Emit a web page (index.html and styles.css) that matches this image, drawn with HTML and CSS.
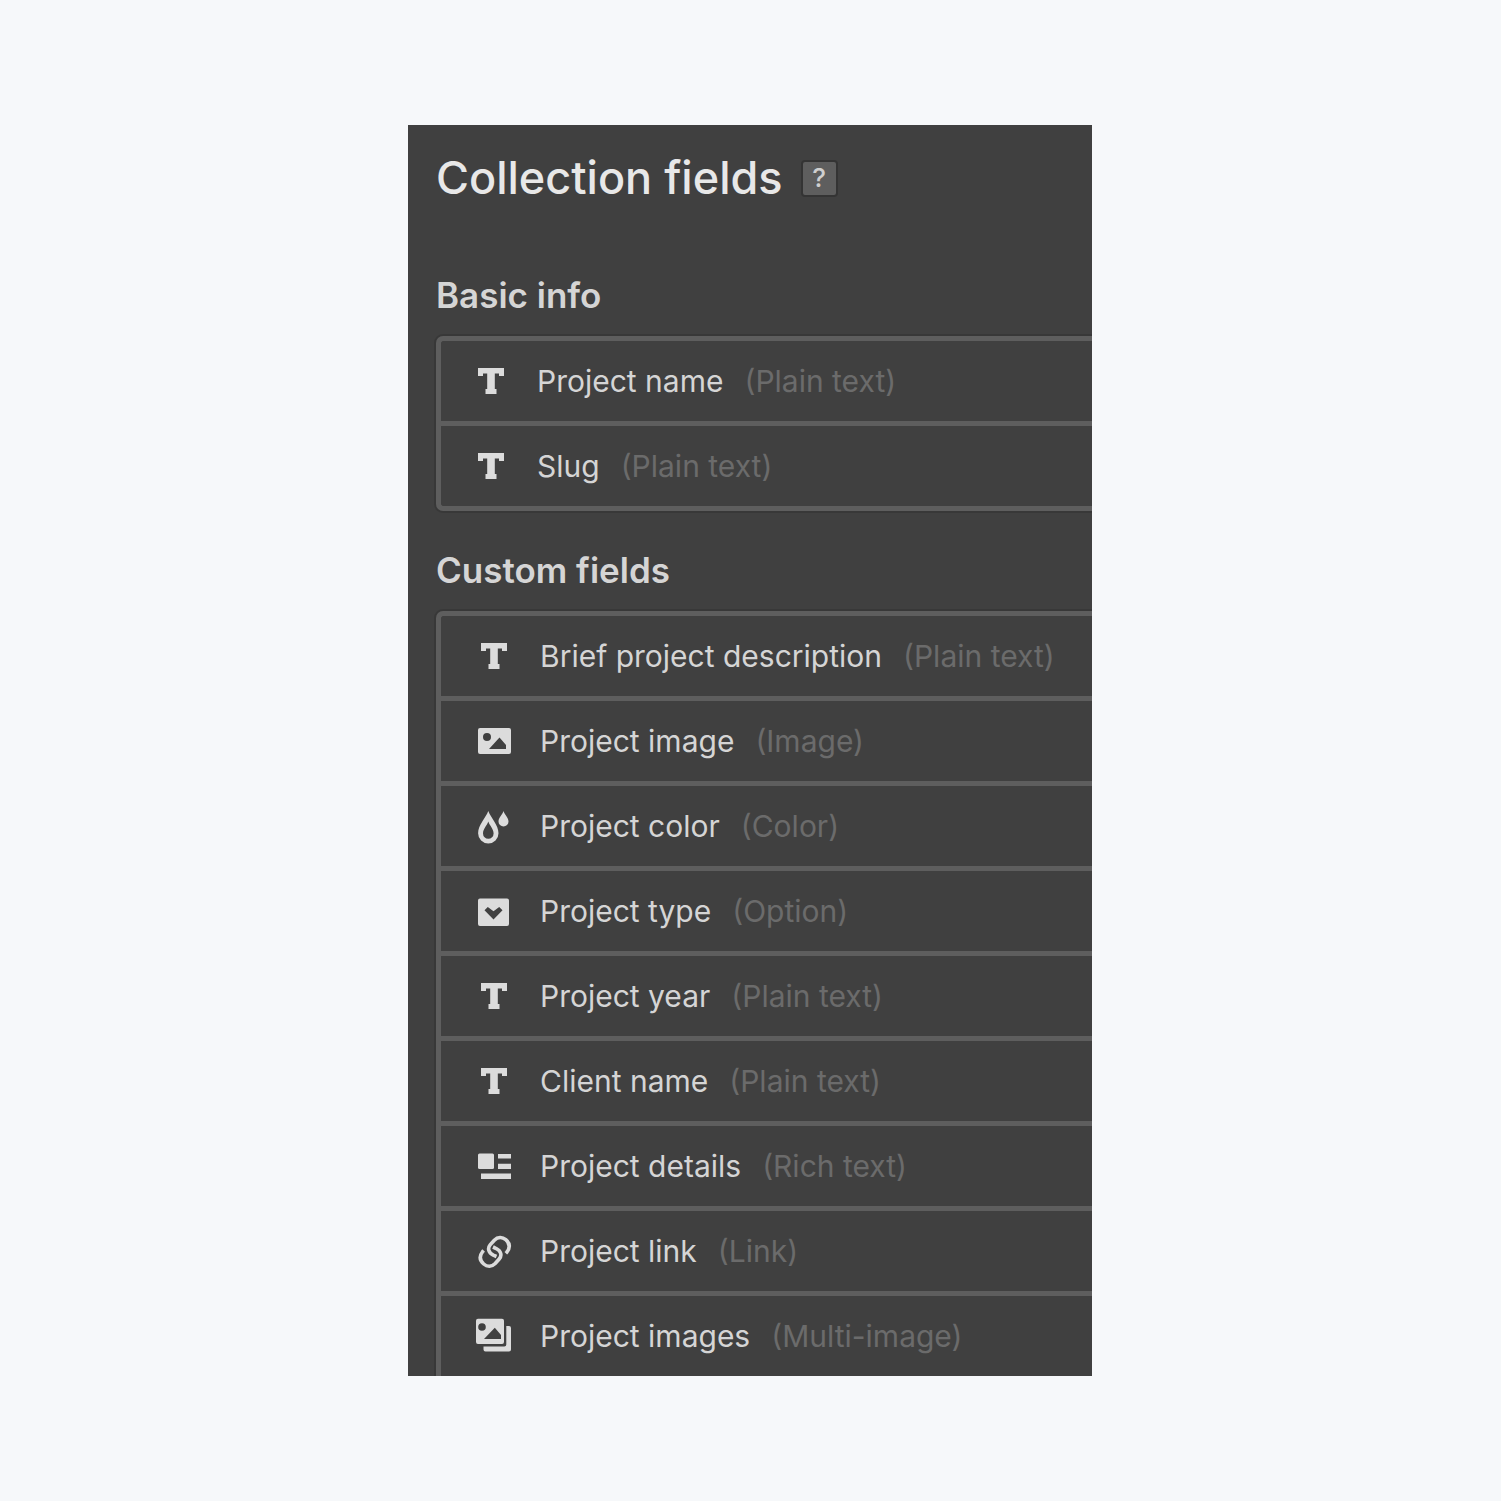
FILE: index.html
```
<!DOCTYPE html>
<html lang="en">
<head>
  <meta charset="UTF-8" />
  <meta name="viewport" content="width=device-width, initial-scale=1" />
  <title>Collection fields</title>
  <link rel="stylesheet" href="styles.css">
</head>
<body>

  <!-- Icons -->
  <svg class="sprite" aria-hidden="true">
    <symbol id="text" viewBox="0 0 36 36">
      <path d="M5 5h26v8h-5v-2.500h-4.200V26H23.500v5h-11v-5h1.700V10.500H10V13H5z"/>
    </symbol>
    <symbol id="image" viewBox="0 0 36 36">
      <path fill-rule="evenodd" d="M4 5h29a2 2 0 0 1 2 2v22a2 2 0 0 1-2 2H4a2 2 0 0 1-2-2V7a2 2 0 0 1 2-2zM11 10a4 4 0 1 0 0 8 4 4 0 0 0 0-8zM13 26h17v-4l-6.500-7.500z"/>
    </symbol>
    <symbol id="color" viewBox="0 0 36 36">
      <path fill-rule="evenodd" d="M12.300 3C15 10 22.500 17 22.500 25.200a10.200 10.200 0 0 1-20.400 0C2.100 17 9.600 10 12.300 3zM12.300 13.500C11 17.500 7 21 7 25.500a5.300 5.300 0 0 0 10.600 0C17.600 21 13.600 17.500 12.300 13.500z"/>
      <path d="M27.500 3c1.200 4 5 6.500 5 10.500a5 5 0 0 1-10 0c0-4 3.800-6.500 5-10.500z"/>
    </symbol>
    <symbol id="option" viewBox="0 0 36 36">
      <path fill-rule="evenodd" d="M4 5.500h27a2 2 0 0 1 2 2V31a2 2 0 0 1-2 2H4a2 2 0 0 1-2-2V7.500a2 2 0 0 1 2-2zM8.500 17.200l9 9.200 9-9.200-3.300-3.300-5.700 4.400-5.700-4.400z"/>
    </symbol>
    <symbol id="rich" viewBox="0 0 36 36">
      <rect x="2" y="5.500" width="16" height="15.500" rx="1.500"/>
      <path d="M22 6h13v4.500H22zM22 15.800h13V21H22zM5 25.500h30V31H5z"/>
    </symbol>
    <symbol id="link" viewBox="0 0 36 36">
      <g fill="none" stroke="currentColor" stroke-width="3.600">
        <path d="M20.500 23.500l-3.200-1.300c-5-2.500-6-7-3-10.500l4-4.500c3.500-3.500 8-3.500 11.500-.5 4 3.500 4.500 8 1 12.500l-1 1"/>
        <path d="M17 14l3.200 1.500c5 2.500 6 7 3 10.500l-4 4.500c-3.500 3.500-8 3.500-11.500.5-4-3.500-4.500-8-1-12.500l1-1"/>
      </g>
    </symbol>
    <symbol id="images" viewBox="0 0 36 36">
      <path fill-rule="evenodd" d="M2 .7h24a2 2 0 0 1 2 2V24a2 2 0 0 1-2 2H2a2 2 0 0 1-2-2V2.700a2 2 0 0 1 2-2zM6 5.200a3.800 3.800 0 1 0 0 7.600 3.800 3.800 0 0 0 0-7.600zM8 21h17v-4l-6.200-7.300z"/>
      <path d="M30.300 8H33a2 2 0 0 1 2 2v21.500a2 2 0 0 1-2 2H9.500a2 2 0 0 1-2-2V28.500h20.800a2 2 0 0 0 2-2z"/>
    </symbol>
  </svg>

  <main class="panel">
    <header class="title">
      <h1>Collection fields</h1>
      <button class="help" type="button" aria-label="Help">?</button>
    </header>

    <!-- Basic info -->
    <section>
      <h2>Basic info</h2>
      <ul class="fields basic">
        <li><svg class="icon"><use href="#text"/></svg>Project name <span class="type">(Plain text)</span></li>
        <li><svg class="icon"><use href="#text"/></svg>Slug <span class="type">(Plain text)</span></li>
      </ul>
    </section>

    <!-- Custom fields -->
    <section>
      <h2>Custom fields</h2>
      <ul class="fields custom">
        <li><svg class="icon"><use href="#text"/></svg>Brief project description <span class="type">(Plain text)</span></li>
        <li><svg class="icon"><use href="#image"/></svg>Project image <span class="type">(Image)</span></li>
        <li><svg class="icon"><use href="#color"/></svg>Project color <span class="type">(Color)</span></li>
        <li><svg class="icon"><use href="#option"/></svg>Project type <span class="type">(Option)</span></li>
        <li><svg class="icon"><use href="#text"/></svg>Project year <span class="type">(Plain text)</span></li>
        <li><svg class="icon"><use href="#text"/></svg>Client name <span class="type">(Plain text)</span></li>
        <li><svg class="icon"><use href="#rich"/></svg>Project details <span class="type">(Rich text)</span></li>
        <li><svg class="icon"><use href="#link"/></svg>Project link <span class="type">(Link)</span></li>
        <li><svg class="icon"><use href="#images"/></svg>Project images <span class="type">(Multi-image)</span></li>
      </ul>
    </section>
  </main>

</body>
</html>
```
FILE: styles.css
```
* {
  box-sizing: border-box;
}

body {
  margin: 0;
  padding: 125px 25px 125px 24px;
  background: #f6f8fa;
  font-family: Inter, "Liberation Sans", sans-serif;
  color: #d5d5d5;
}

.sprite {
  display: none;
}

.panel {
  max-width: 684px;
  margin: 0 auto;
  padding: 23px 0 0 28px;
  background: #404040;
  overflow: hidden;
}

.title {
  display: flex;
  align-items: center;
  gap: 18px;
  margin-bottom: 65px;
}

h1 {
  margin: 0;
  font-size: 45px;
  line-height: 60px;
  font-weight: 500;
  color: #e8e8e8;
}

.help {
  width: 37px;
  height: 37px;
  padding: 0;
  border: 2px solid #343434;
  border-radius: 4px;
  background: #5e5e5e;
  color: #cfcfcf;
  font: 500 26px/32px Inter, "Liberation Sans", sans-serif;
}

h2 {
  margin: 0;
  padding-bottom: 18px;
  font-size: 35px;
  line-height: 45px;
  font-weight: 600;
}

.fields {
  margin: 0;
  padding: 0;
  list-style: none;
  border: 5px solid #5e5e5e;
  border-right: 0;
  border-radius: 7px 0 0 7px;
  box-shadow: 0 0 0 2px #383838;
}

.fields li {
  display: flex;
  align-items: center;
  height: 80px;
  padding-left: 35px;
  font-size: 30px;
  line-height: 40px;
  white-space: nowrap;
}

.fields li + li {
  height: 85px;
  border-top: 5px solid #5e5e5e;
}

.basic {
  margin-bottom: 37px;
}

.fields.basic li {
  padding-left: 32px;
}

/* the list runs on past the bottom of the panel */
.custom {
  border-bottom: 0;
  border-bottom-left-radius: 0;
}

.icon {
  flex: none;
  width: 36px;
  height: 36px;
  margin-right: 28px;
  fill: currentColor;
  color: #dcdcdc;
}

.type {
  margin-left: 21px;
  color: #6b6b6b;
}
```
